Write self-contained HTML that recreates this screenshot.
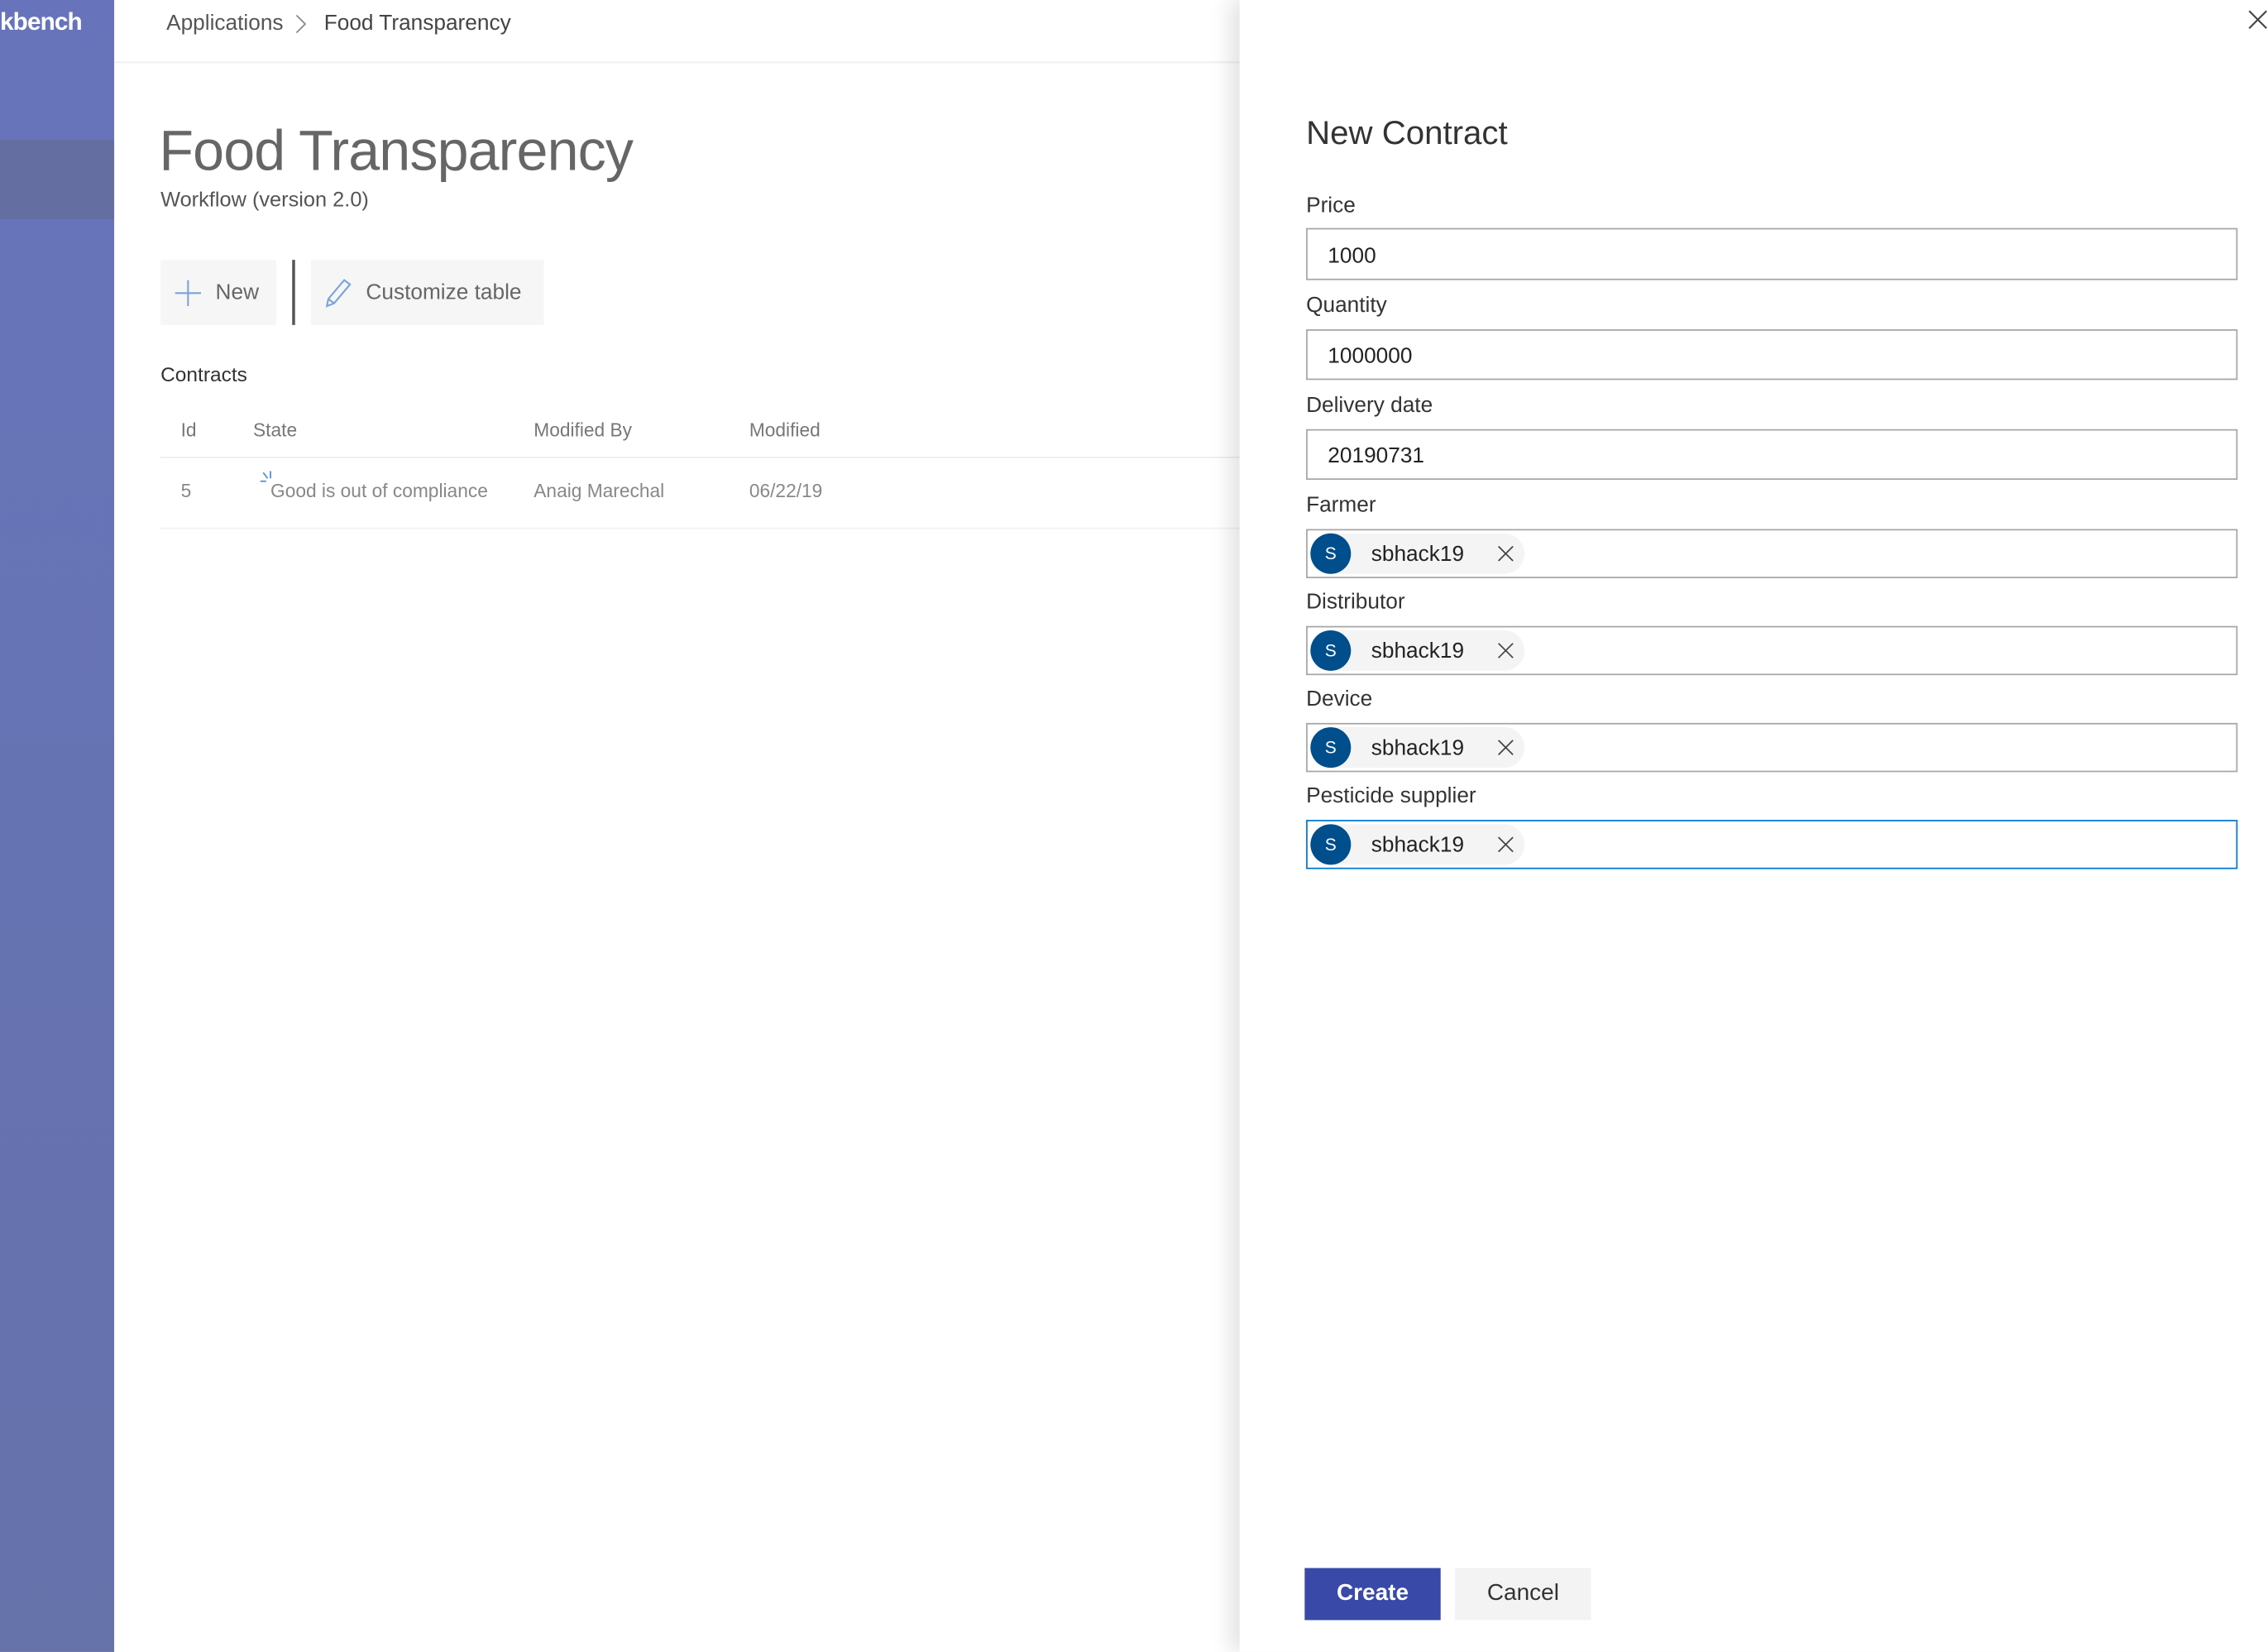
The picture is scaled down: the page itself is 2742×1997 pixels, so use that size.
<!DOCTYPE html>
<html><head><meta charset="utf-8"><style>
html,body{margin:0;padding:0;width:2742px;height:1996px;overflow:hidden;background:#fff}
#w{position:absolute;left:0;top:1px;width:1568px;height:1141px;transform:scale(1.7487,1.7493);transform-origin:0 0;font-family:"Liberation Sans",sans-serif;}
.a{position:absolute;white-space:nowrap}
.side{left:0;top:-1px;width:79px;height:1142px;background:linear-gradient(#6774bb,#6672aa)}
.lbl{font-size:15px;color:#333;left:903px}
.inp{left:903px;width:644px;border:1px solid #a6a6a6;background:#fff;box-sizing:border-box}
.inp span{position:absolute;left:14px;font-size:15px;color:#222}
.chip{position:absolute;left:2px;top:2px;width:148px;height:28px;background:#f4f4f4;border-radius:14px}
.av{position:absolute;left:0;top:0;width:28px;height:28px;border-radius:50%;background:#004e8c;color:#fff;font-size:12px;text-align:center;line-height:28px}
.chip .t{position:absolute;left:42px;top:6px;font-size:15px;color:#222}
.chip .x{position:absolute;left:129px;top:8px;width:12px;height:12px}
.th{top:289px;font-size:13px;color:#777}
.td{top:331px;font-size:13px;color:#888}
</style></head><body><div id="w">
<div class="a side"></div>
<div class="a" style="left:0;top:96px;width:79px;height:55px;background:#646ea0"></div>
<div class="a" style="left:0;top:5px;font-size:17px;color:#fff;font-weight:bold;letter-spacing:-0.5px">kbench</div>
<div class="a" style="left:79px;top:-1px;width:778px;height:1142px;background:#fff"></div>
<div class="a" style="left:79px;top:42px;width:778px;height:1px;background:#eee"></div>
<div class="a" style="left:115px;top:7px;font-size:15px;color:#555">Applications</div>
<svg class="a" style="left:203px;top:9px" width="10" height="14"><path d="M2 1 L8 7 L2 13" fill="none" stroke="#888" stroke-width="1"/></svg>
<div class="a" style="left:224px;top:7px;font-size:15px;color:#444">Food Transparency</div>
<div class="a" style="left:110px;top:83px;font-size:39px;color:#666;letter-spacing:-0.5px">Food Transparency</div>
<div class="a" style="left:111px;top:130px;font-size:14.5px;color:#555">Workflow (version 2.0)</div>
<div class="a" style="left:111px;top:179px;width:80px;height:45px;background:#f6f6f6"></div>
<svg class="a" style="left:121px;top:193px" width="18" height="18"><path d="M9 0V18M0 9H18" stroke="#7aa4d8" stroke-width="1.2"/></svg>
<div class="a" style="left:149px;top:193px;font-size:15px;color:#666">New</div>
<div class="a" style="left:202px;top:179px;width:2px;height:45px;background:#555"></div>
<div class="a" style="left:215px;top:179px;width:161px;height:45px;background:#f6f6f6"></div>
<svg class="a" style="left:224px;top:191px" width="20" height="22"><path d="M2 20 L3 15 L14 2 L18 5 L7 18 Z M3 15 L7 18" fill="none" stroke="#7aa4d8" stroke-width="1.2"/></svg>
<div class="a" style="left:253px;top:193px;font-size:15px;color:#666">Customize table</div>
<div class="a" style="left:111px;top:250px;font-size:14px;color:#333">Contracts</div>
<div class="a th" style="left:125px">Id</div>
<div class="a th" style="left:175px">State</div>
<div class="a th" style="left:369px">Modified By</div>
<div class="a th" style="left:518px">Modified</div>
<div class="a" style="left:111px;top:315px;width:746px;height:1px;background:#eee"></div>
<div class="a td" style="left:125px">5</div>
<svg class="a" style="left:179px;top:324px" width="12" height="12"><path d="M8 1V6M3 2L6 6M1 8H5" stroke="#4a90d9" stroke-width="1"/></svg>
<div class="a td" style="left:187px">Good is out of compliance</div>
<div class="a td" style="left:369px">Anaig Marechal</div>
<div class="a td" style="left:518px">06/22/19</div>
<div class="a" style="left:111px;top:364px;width:746px;height:1px;background:#f2f2f2"></div>
<div class="a" style="left:857px;top:-1px;width:711px;height:1142px;background:#fff;box-shadow:-6px 0 14px rgba(0,0,0,0.12)"></div>
<svg class="a" style="left:1554px;top:6px" width="14" height="14"><path d="M1 1L13 13M13 1L1 13" stroke="#444" stroke-width="1.2"/></svg>
<div class="a" style="left:903px;top:78px;font-size:23px;color:#333">New Contract</div>
<div class="a lbl" style="top:133px">Price</div>
<div class="a inp" style="top:157px;height:36px"><span style="top:10px">1000</span></div>
<div class="a lbl" style="top:202px">Quantity</div>
<div class="a inp" style="top:227px;height:35px"><span style="top:9px">1000000</span></div>
<div class="a lbl" style="top:271px">Delivery date</div>
<div class="a inp" style="top:296px;height:35px"><span style="top:9px">20190731</span></div>
<div class="a lbl" style="top:340px">Farmer</div>
<div class="a inp" style="top:365px;height:34px"><div class="chip"><div class="av">S</div><div class="t">sbhack19</div><svg class="x"><path d="M1 1L11 11M11 1L1 11" stroke="#444" stroke-width="1"/></svg></div></div>
<div class="a lbl" style="top:407px">Distributor</div>
<div class="a inp" style="top:432px;height:34px"><div class="chip"><div class="av">S</div><div class="t">sbhack19</div><svg class="x"><path d="M1 1L11 11M11 1L1 11" stroke="#444" stroke-width="1"/></svg></div></div>
<div class="a lbl" style="top:474px">Device</div>
<div class="a inp" style="top:499px;height:34px"><div class="chip"><div class="av">S</div><div class="t">sbhack19</div><svg class="x"><path d="M1 1L11 11M11 1L1 11" stroke="#444" stroke-width="1"/></svg></div></div>
<div class="a lbl" style="top:541px">Pesticide supplier</div>
<div class="a inp" style="top:566px;height:34px;border-color:#0078d4"><div class="chip"><div class="av">S</div><div class="t">sbhack19</div><svg class="x"><path d="M1 1L11 11M11 1L1 11" stroke="#444" stroke-width="1"/></svg></div></div>
<div class="a" style="left:902px;top:1083px;width:94px;height:36px;background:#3849a8;color:#fff;font-size:16px;font-weight:bold;text-align:center;line-height:36px">Create</div>
<div class="a" style="left:1006px;top:1083px;width:94px;height:36px;background:#f3f3f3;color:#333;font-size:16px;text-align:center;line-height:36px">Cancel</div>
</div></body></html>
